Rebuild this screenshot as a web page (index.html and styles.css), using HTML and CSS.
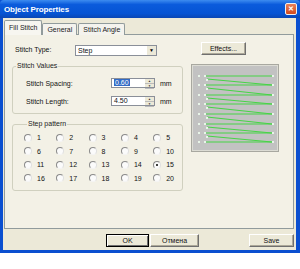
FILE: index.html
```html
<!DOCTYPE html>
<html>
<head>
  <title>Object Properties</title>
  <link rel="stylesheet" href="styles.css">
</head>
<body>

<div class="window">
  <div class="titlebar">
    <span class="title">Object Properties</span>
    <span class="close">&#x2715;</span>
  </div>
  <div class="frame">
    <div class="tabs">
      <span class="tab active">Fill Stitch</span>
      <span class="tab">General</span>
      <span class="tab">Stitch Angle</span>
    </div>
    <div class="panel">
      <div class="top-row">
        <span class="lbl type-lbl">Stitch Type:</span>
        <div class="combo"><span class="combo-text">Step</span><span class="drop">&#9660;</span></div>
        <button class="btn effects">Effects...</button>
      </div>
      <div class="main">
        <div class="left">
          <fieldset class="group values">
            <legend>Stitch Values</legend>
            <div class="field-row">
              <span class="lbl field-lbl">Stitch Spacing:</span>
              <div class="spin"><span class="spin-text"><span class="sel">0.60</span></span><span class="arrows"><i>&#9650;</i><i>&#9660;</i></span></div>
              <span class="unit">mm</span>
            </div>
            <div class="field-row">
              <span class="lbl field-lbl">Stitch Length:</span>
              <div class="spin"><span class="spin-text">4.50</span><span class="arrows"><i>&#9650;</i><i>&#9660;</i></span></div>
              <span class="unit">mm</span>
            </div>
          </fieldset>
          <fieldset class="group pattern">
            <legend>Step pattern</legend>
            <div class="radios">
              <label class="radio"><span class="dot"></span>1</label>
              <label class="radio"><span class="dot"></span>2</label>
              <label class="radio"><span class="dot"></span>3</label>
              <label class="radio"><span class="dot"></span>4</label>
              <label class="radio"><span class="dot"></span>5</label>
              <label class="radio"><span class="dot"></span>6</label>
              <label class="radio"><span class="dot"></span>7</label>
              <label class="radio"><span class="dot"></span>8</label>
              <label class="radio"><span class="dot"></span>9</label>
              <label class="radio"><span class="dot"></span>10</label>
              <label class="radio"><span class="dot"></span>11</label>
              <label class="radio"><span class="dot"></span>12</label>
              <label class="radio"><span class="dot"></span>13</label>
              <label class="radio"><span class="dot"></span>14</label>
              <label class="radio"><span class="dot checked"></span>15</label>
              <label class="radio"><span class="dot"></span>16</label>
              <label class="radio"><span class="dot"></span>17</label>
              <label class="radio"><span class="dot"></span>18</label>
              <label class="radio"><span class="dot"></span>19</label>
              <label class="radio"><span class="dot"></span>20</label>
            </div>
          </fieldset>
        </div>
        <div class="preview">
          <svg width="86" height="86" viewBox="0 0 86 86">
            <g stroke="#46d446" stroke-width="1.1" fill="none">
              <line x1="13" y1="11" x2="80" y2="11"/>
              <line x1="15" y1="14" x2="80" y2="20"/>
              <line x1="13" y1="20" x2="80" y2="20"/>
              <line x1="15" y1="23" x2="80" y2="30"/>
              <line x1="13" y1="30" x2="80" y2="30"/>
              <line x1="15" y1="33" x2="80" y2="39"/>
              <line x1="13" y1="39" x2="80" y2="39"/>
              <line x1="15" y1="42" x2="80" y2="49"/>
              <line x1="13" y1="49" x2="80" y2="49"/>
              <line x1="15" y1="52" x2="80" y2="59"/>
              <line x1="13" y1="59" x2="80" y2="59"/>
              <line x1="15" y1="62" x2="80" y2="68"/>
              <line x1="13" y1="68" x2="80" y2="68"/>
              <line x1="15" y1="71" x2="80" y2="77"/>
              <line x1="13" y1="77" x2="80" y2="77"/>
            </g>
            <g fill="#e8f4e8">
              <rect x="6" y="10" width="2" height="2"/><rect x="12" y="10" width="2" height="2"/><rect x="80" y="10" width="2" height="2"/>
              <rect x="6" y="19" width="2" height="2"/><rect x="12" y="19" width="2" height="2"/><rect x="80" y="19" width="2" height="2"/>
              <rect x="6" y="29" width="2" height="2"/><rect x="12" y="29" width="2" height="2"/><rect x="80" y="29" width="2" height="2"/>
              <rect x="6" y="38" width="2" height="2"/><rect x="12" y="38" width="2" height="2"/><rect x="80" y="38" width="2" height="2"/>
              <rect x="6" y="48" width="2" height="2"/><rect x="12" y="48" width="2" height="2"/><rect x="80" y="48" width="2" height="2"/>
              <rect x="6" y="58" width="2" height="2"/><rect x="12" y="58" width="2" height="2"/><rect x="80" y="58" width="2" height="2"/>
              <rect x="6" y="67" width="2" height="2"/><rect x="12" y="67" width="2" height="2"/><rect x="80" y="67" width="2" height="2"/>
              <rect x="6" y="76" width="2" height="2"/><rect x="12" y="76" width="2" height="2"/><rect x="80" y="76" width="2" height="2"/>
              <rect x="14" y="14" width="2" height="2"/><rect x="14" y="23" width="2" height="2"/><rect x="14" y="33" width="2" height="2"/>
              <rect x="14" y="42" width="2" height="2"/><rect x="14" y="52" width="2" height="2"/><rect x="14" y="62" width="2" height="2"/>
              <rect x="14" y="71" width="2" height="2"/>
            </g>
          </svg>
        </div>
      </div>
    </div>
    <div class="buttons">
      <button class="btn ok">OK</button>
      <button class="btn cancel">Отмена</button>
      <button class="btn save">Save</button>
    </div>
  </div>
</div>

</body>
</html>
```

FILE: styles.css
```css
body {
  margin: 0;
  background: #ffffff;
  font-family: "Liberation Sans", Arial, sans-serif;
  font-size: 7px;
  color: #111;
}
.window {
  width: 300px;
  height: 253px;
  display: flex;
  flex-direction: column;
  background: #0a4fd0;
}
.titlebar {
  height: 18px;
  flex: none;
  display: flex;
  align-items: center;
  justify-content: space-between;
  padding: 0 3px 0 4px;
  background: linear-gradient(#3d8cf0, #0b5bdc 25%, #0654d4 75%, #0a47b4);
  border-radius: 4px 4px 0 0;
}
.title {
  color: #fff;
  font-weight: bold;
  font-size: 8px;
  letter-spacing: -0.1px;
}
.close {
  width: 12px;
  height: 12px;
  display: flex;
  align-items: center;
  justify-content: center;
  background: linear-gradient(#e8805a, #d24a1e);
  border: 1px solid #f0f0f0;
  border-radius: 2px;
  color: #fff;
  font-size: 7px;
  font-weight: bold;
  box-sizing: border-box;
}
.frame {
  flex: 1;
  margin: 0 4px 3px 3px;
  background: #ece9d8;
  display: flex;
  flex-direction: column;
  padding: 0 2px 0 1px;
}
.tabs {
  display: flex;
  align-items: flex-end;
  height: 15px;
  margin-top: 2px;
  margin-bottom: -1px;
  padding-left: 0;
  position: relative;
}
.tab {
  height: 11px;
  line-height: 11px;
  padding: 0 4px;
  border: 1px solid #919b9c;
  border-bottom: none;
  border-radius: 2px 2px 0 0;
  background: #f4f3ee;
  margin-right: 1px;
  color: #222;
}
.tab.active {
  height: 14px;
  line-height: 13px;
  background: #f7f6f0;
  position: relative;
  z-index: 1;
  margin-right: 0;
}
.panel {
  height: 195px;
  box-sizing: border-box;
  border: 1px solid #919b9c;
  background: #f3f1e6;
  padding: 7px 8px 0 7px;
}
.top-row {
  display: flex;
  align-items: flex-start;
  height: 14px;
}
.type-lbl {
  width: 60px;
  margin-left: 3px;
  margin-top: 4px;
}
.combo {
  width: 82px;
  height: 11px;
  margin-top: 3px;
  box-sizing: border-box;
  border: 1px solid #8a8f99;
  background: #fff;
  display: flex;
  align-items: center;
  justify-content: space-between;
  padding-left: 2px;
}
.drop {
  width: 9px;
  height: 9px;
  background: #ece9d8;
  border-left: 1px solid #fff;
  font-size: 5px;
  line-height: 9px;
  text-align: center;
  color: #000;
}
.btn {
  font-family: "Liberation Sans", Arial, sans-serif;
  font-size: 7px;
  color: #111;
  background: #ece9d8;
  border: 1px solid;
  border-color: #fff #6f6f6f #6f6f6f #fff;
  box-shadow: inset -1px -1px 0 #aca899;
  padding: 0;
  height: 13px;
  box-sizing: border-box;
}
.effects {
  width: 45px;
  margin-left: 44px;
}
.main {
  display: flex;
  margin-top: 6px;
}
.left {
  width: 171px;
  display: flex;
  flex-direction: column;
  gap: 6px;
}
.group {
  margin: 0;
  padding: 0;
  min-width: 0;
  border: 1px solid #d0d0bf;
  border-radius: 3px;
}
.group legend {
  font-size: 7px;
  line-height: 8px;
  padding: 0 1px;
  margin-left: 3px;
  color: #222;
}
.values {
  height: 52px;
  box-sizing: border-box;
  padding-top: 8px;
}
.field-row {
  display: flex;
  align-items: center;
  height: 10px;
  margin-bottom: 8px;
}
.field-lbl {
  width: 85px;
  margin-left: 13px;
}
.spin {
  width: 44px;
  height: 10px;
  box-sizing: border-box;
  border: 1px solid #8a8f99;
  background: #fff;
  display: flex;
}
.spin-text {
  flex: 1;
  line-height: 8px;
  padding-left: 2px;
}
.sel {
  background: #316ac5;
  color: #fff;
  padding: 0 1px;
}
.arrows {
  width: 9px;
  display: flex;
  flex-direction: column;
  background: #ece9d8;
}
.arrows i {
  flex: 1;
  font-style: normal;
  font-size: 3px;
  line-height: 4px;
  text-align: center;
  color: #333;
  border-bottom: 1px solid #bbb;
}
.unit {
  margin-left: 5px;
}
.pattern {
  height: 71px;
  box-sizing: border-box;
  padding: 3px 0 0 11px;
}
.radios {
  display: grid;
  grid-template-columns: repeat(5, 32.3px);
  grid-auto-rows: 13.5px;
}
.radio {
  display: flex;
  align-items: center;
  gap: 5px;
}
.dot {
  width: 8px;
  height: 8px;
  box-sizing: border-box;
  border-radius: 50%;
  border: 1px solid;
  border-color: #8a8a8a #e0e0e0 #f4f4f4 #8a8a8a;
  background: #fbfbfb;
  display: flex;
  align-items: center;
  justify-content: center;
}
.dot.checked::after {
  content: "";
  width: 2px;
  height: 2px;
  border-radius: 50%;
  background: #000;
}
.preview {
  width: 86px;
  height: 86px;
  margin: 3px 0 0 9px;
  box-sizing: border-box;
  background: #c2c2c2;
  border: 1px solid #dcdcd4;
  outline: 1px solid #a8a8a0;
}
.preview svg {
  display: block;
  margin: -1px;
}
.buttons {
  display: flex;
  margin-top: 5px;
}
.ok {
  width: 43px;
  margin-left: 102px;
  border-color: #000;
  box-shadow: inset 1px 1px 0 #fff, inset -1px -1px 0 #6f6f6f;
}
.cancel {
  width: 49px;
  margin-left: 1px;
}
.save {
  width: 45px;
  margin-left: 50px;
}
```
